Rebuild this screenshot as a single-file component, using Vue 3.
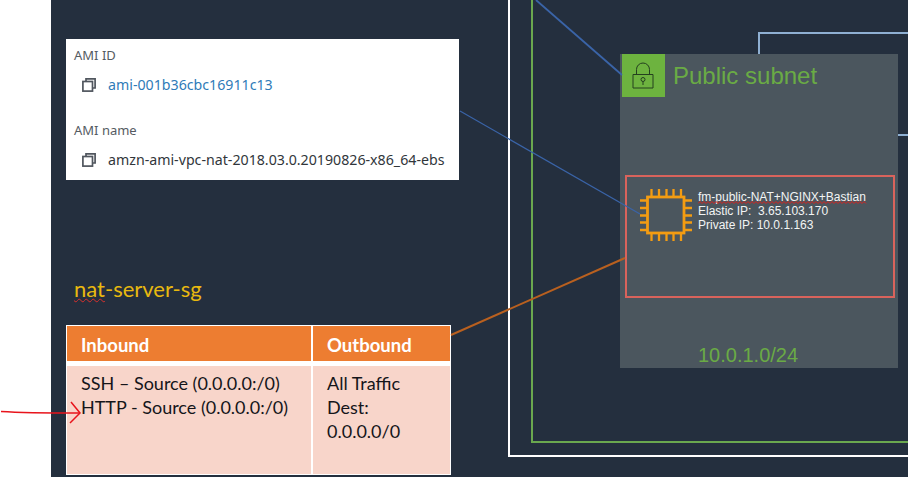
<script setup>
const pins = [11.500, 19, 26.500, 33.500, 41]
const zigzag = (width) => {
  let d = 'M0 2.500'
  for (let x = 2, up = true; x <= width; x += 2, up = !up) {
    d += `L${x} ${up ? 0.500 : 2.500}`
  }
  return d
}
const nameWave = zigzag(168)
</script>

<template>
  <div class="canvas">
    <div class="slide">
      <div class="vpc-outer"></div>
      <div class="vpc-green"></div>
      <div class="route-box"></div>

      <div class="subnet">
        <div class="subnet-head">
          <div class="lock-tile">
            <svg width="43" height="43" viewBox="0 0 43 43" fill="none" stroke="#24401f" stroke-width="1">
              <path d="M11 20.500h20v13.500h-20z" />
              <path d="M14.500 20.500v-5a6.500 6.500 0 0 1 13 0v5" />
              <circle cx="21" cy="25.500" r="2" />
              <path d="M21 27.500v3.500" />
            </svg>
          </div>
          <span class="subnet-title">Public subnet</span>
        </div>
        <div class="instance">
          <svg class="chip" width="52" height="52" viewBox="0 0 52 52" fill="none" stroke="#f39c12" stroke-width="2.300">
            <rect x="7.500" y="8" width="36.500" height="36" stroke-width="2.800" />
            <g v-for="p in pins" :key="p">
              <path :d="`M${p} 0v7M${p} 44v8M0 ${p}h7M44 ${p}h8`" />
            </g>
          </svg>
          <div class="instance-text">
            <div class="name-line">
              fm-public-NAT+NGINX+Bastian
              <svg class="wave" width="169" height="3" viewBox="0 0 169 3" fill="none">
                <path :d="nameWave" stroke="#e0201c" stroke-width="1" />
              </svg>
            </div>
            <div>Elastic IP:&nbsp; 3.65.103.170</div>
            <div>Private IP: 10.0.1.163</div>
          </div>
        </div>
        <div class="cidr">10.0.1.0/24</div>
      </div>

      <div class="ami-card">
        <div class="ami-label">AMI ID</div>
        <div class="ami-row">
          <svg class="copy" width="14" height="14" viewBox="0 0 14 14" fill="none" stroke="#50565e" stroke-width="1.700">
            <path d="M4 3.500v-2.600h9.100v9.100h-2.600" />
            <rect x="0.900" y="3.500" width="9.600" height="9.600" />
          </svg>
          <span class="ami-link">ami-001b36cbc16911c13</span>
        </div>
        <div class="ami-label second">AMI name</div>
        <div class="ami-row">
          <svg class="copy" width="14" height="14" viewBox="0 0 14 14" fill="none" stroke="#50565e" stroke-width="1.700">
            <path d="M4 3.500v-2.600h9.100v9.100h-2.600" />
            <rect x="0.900" y="3.500" width="9.600" height="9.600" />
          </svg>
          <span class="ami-value">amzn-ami-vpc-nat-2018.03.0.20190826-x86_64-ebs</span>
        </div>
      </div>

      <div class="sg-name"><span class="squiggle-nat">nat</span>-server-sg</div>

      <div class="sg-table">
        <div class="cell head">Inbound</div>
        <div class="cell head">Outbound</div>
        <div class="cell body">
          <div>SSH – Source (0.0.0.0:/0)</div>
          <div>HTTP - Source (0.0.0.0:/0)</div>
        </div>
        <div class="cell body">
          <div>All Traffic</div>
          <div>Dest:</div>
          <div>0.0.0.0/0</div>
        </div>
      </div>
    </div>

    <svg class="overlay" width="908" height="477" viewBox="0 0 908 477" fill="none">
      <path d="M536 0L622 75" stroke="#3a64a8" stroke-width="1.800" />
      <path d="M460 111L640 214" stroke="#3a64a8" stroke-width="1.200" />
      <path d="M451 335L625 258" stroke="#b9601f" stroke-width="2" />
      <path d="M1 411.500C25 413 55 413 80 413" stroke="#e8141c" stroke-width="1.500" />
      <path d="M71 402L80 413L70 423" stroke="#e8141c" stroke-width="1.500" />
    </svg>
  </div>
</template>

<style scoped>
.canvas {
  position: relative;
  width: 908px;
  height: 477px;
  overflow: hidden;
  background: #fff;
}
.slide {
  position: absolute;
  left: 51px;
  top: 0;
  width: 857px;
  height: 477px;
  background: #242f3e;
}
.overlay {
  position: absolute;
  left: 0;
  top: 0;
  pointer-events: none;
}
.vpc-outer {
  position: absolute;
  left: 457px;
  top: -10px;
  width: 500px;
  height: 463px;
  border: 2px solid #fff;
}
.vpc-green {
  position: absolute;
  left: 480px;
  top: -10px;
  width: 500px;
  height: 449px;
  border: 2px solid #6aa84f;
}
.route-box {
  position: absolute;
  left: 707px;
  top: 32px;
  width: 300px;
  height: 100px;
  border: 2px solid #8fb0d3;
}
.subnet {
  position: absolute;
  left: 569px;
  top: 54px;
  width: 278px;
  height: 314px;
  background: #4b565e;
  font-family: "Liberation Sans", Arial, sans-serif;
}
.subnet-head {
  display: flex;
  align-items: center;
  gap: 8px;
  margin: -1px 0 0 2px;
}
.lock-tile {
  width: 43px;
  height: 43px;
  background: #6db33f;
}
.lock-tile svg {
  display: block;
}
.subnet-title {
  font-size: 24px;
  color: #6aab45;
  line-height: 43px;
  padding-top: 1px;
}
.instance {
  position: absolute;
  left: 5px;
  top: 121px;
  width: 270px;
  height: 123px;
  box-sizing: border-box;
  border: 2px solid #d9635c;
  display: flex;
  gap: 6px;
  padding: 12px 0 0 13px;
}
.chip {
  flex: none;
}
.instance-text {
  color: #f2f4f4;
  font-size: 12px;
  line-height: 14px;
  padding-top: 1px;
}
.name-line {
  position: relative;
}
.wave {
  position: absolute;
  left: 0;
  top: 11px;
  display: block;
}
.cidr {
  position: absolute;
  left: 78px;
  top: 290px;
  font-size: 20px;
  line-height: 23px;
  color: #6aab45;
}
.ami-card {
  position: absolute;
  left: 15px;
  top: 39px;
  width: 393px;
  height: 141px;
  background: #fff;
  box-sizing: border-box;
  padding: 7px 0 0 8px;
  font-family: "Noto Sans", "Open Sans", sans-serif;
  font-size: 13px;
  line-height: 18px;
}
.ami-label {
  color: #555b62;
}
.ami-label.second {
  margin-top: 27px;
}
.ami-row {
  display: flex;
  align-items: center;
  gap: 12px;
  margin: 12px 0 0 8px;
  font-size: 14.200px;
}
.copy {
  flex: none;
}
.ami-link {
  color: #2f7bb8;
}
.ami-value {
  color: #31363b;
}
.sg-name {
  position: absolute;
  left: 23px;
  top: 276px;
  font-family: Lato, "Open Sans", sans-serif;
  font-size: 22px;
  line-height: 26px;
  color: #e8b90f;
}
.squiggle-nat {
  text-decoration: underline wavy #d9302c 1px;
  text-decoration-skip-ink: none;
  text-underline-offset: 1px;
}
.sg-table {
  position: absolute;
  left: 15px;
  top: 325px;
  width: 385px;
  height: 150px;
  box-sizing: border-box;
  display: grid;
  grid-template-columns: 244px 1fr;
  grid-template-rows: 35px 1fr;
  background: #fff;
  padding: 1px;
  column-gap: 2px;
  row-gap: 6px;
  font-family: Lato, "Open Sans", sans-serif;
  font-size: 18px;
  line-height: 24px;
  color: #15151a;
}
.cell {
  padding-left: 14px;
}
.head {
  background: #ed7d31;
  color: #fff;
  font-size: 18.500px;
  font-weight: 700;
  line-height: 38px;
}
.body {
  background: #f8d5ca;
  padding-top: 5px;
  margin-top: -1px;
}
</style>

<style>
body {
  margin: 0;
  background: #fff;
}
</style>
